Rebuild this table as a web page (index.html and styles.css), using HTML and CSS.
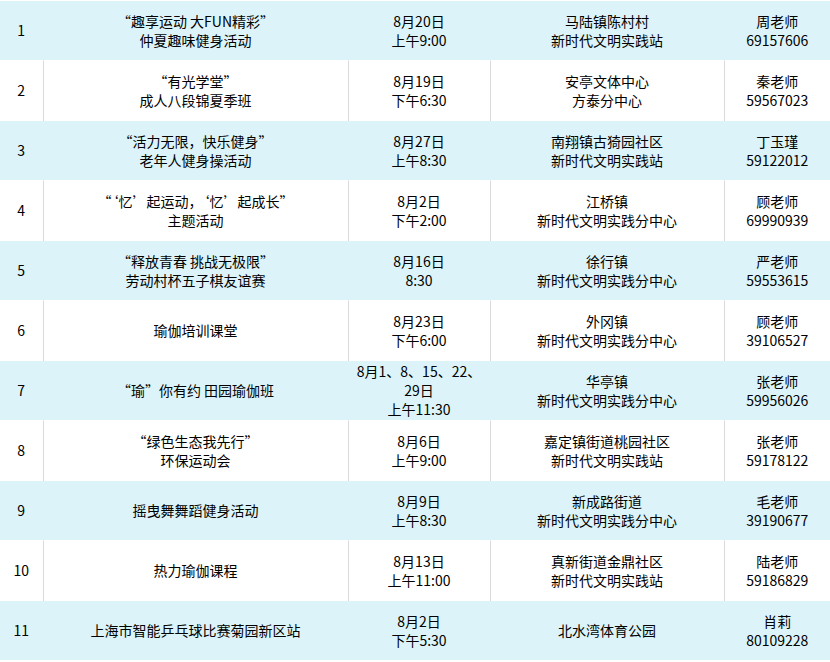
FILE: index.html
```html
<!DOCTYPE html>
<html lang="zh-CN">
<head>
<meta charset="utf-8">
<title>活动列表</title>
<link rel="stylesheet" href="styles.css">
</head>
<body>
<table class="schedule">
  <colgroup>
    <col class="c-num"><col class="c-name"><col class="c-date"><col class="c-place"><col class="c-contact">
  </colgroup>
  <tbody>
    <tr class="row alt"><td>1</td><td>“趣享运动 大FUN精彩”<br>仲夏趣味健身活动</td><td>8月20日<br>上午9:00</td><td>马陆镇陈村村<br>新时代文明实践站</td><td>周老师<br>69157606</td></tr>
    <tr class="row"><td>2</td><td>“有光学堂”<br>成人八段锦夏季班</td><td>8月19日<br>下午6:30</td><td>安亭文体中心<br>方泰分中心</td><td>秦老师<br>59567023</td></tr>
    <tr class="row alt"><td>3</td><td>“活力无限，快乐健身”<br>老年人健身操活动</td><td>8月27日<br>上午8:30</td><td>南翔镇古猗园社区<br>新时代文明实践站</td><td>丁玉瑾<br>59122012</td></tr>
    <tr class="row"><td>4</td><td>“‘忆’起运动，‘忆’起成长”<br>主题活动</td><td>8月2日<br>下午2:00</td><td>江桥镇<br>新时代文明实践分中心</td><td>顾老师<br>69990939</td></tr>
    <tr class="row alt"><td>5</td><td>“释放青春 挑战无极限”<br>劳动村杯五子棋友谊赛</td><td>8月16日<br>8:30</td><td>徐行镇<br>新时代文明实践分中心</td><td>严老师<br>59553615</td></tr>
    <tr class="row"><td>6</td><td>瑜伽培训课堂</td><td>8月23日<br>下午6:00</td><td>外冈镇<br>新时代文明实践分中心</td><td>顾老师<br>39106527</td></tr>
    <tr class="row alt"><td>7</td><td>“瑜”你有约 田园瑜伽班</td><td>8月1、8、15、22、<br>29日<br>上午11:30</td><td>华亭镇<br>新时代文明实践分中心</td><td>张老师<br>59956026</td></tr>
    <tr class="row"><td>8</td><td>“绿色生态我先行”<br>环保运动会</td><td>8月6日<br>上午9:00</td><td>嘉定镇街道桃园社区<br>新时代文明实践站</td><td>张老师<br>59178122</td></tr>
    <tr class="row alt"><td>9</td><td>摇曳舞舞蹈健身活动</td><td>8月9日<br>上午8:30</td><td>新成路街道<br>新时代文明实践分中心</td><td>毛老师<br>39190677</td></tr>
    <tr class="row"><td>10</td><td>热力瑜伽课程</td><td>8月13日<br>上午11:00</td><td>真新街道金鼎社区<br>新时代文明实践站</td><td>陆老师<br>59186829</td></tr>
    <tr class="row alt"><td>11</td><td>上海市智能乒乓球比赛菊园新区站</td><td>8月2日<br>下午5:30</td><td>北水湾体育公园</td><td>肖莉<br>80109228</td></tr>
  </tbody>
</table>
</body>
</html>
```
FILE: styles.css
```css
html, body {
  margin: 0;
  padding: 0;
  background: #ffffff;
}

.schedule {
  width: 830px;
  table-layout: fixed;
  border-collapse: collapse;
  font-family: "Noto Sans CJK SC", "Noto Sans", sans-serif;
  font-size: 14px;
  line-height: 19px;
  color: #000000;
  font-feature-settings: "fwid" 0;
}

.c-num { width: 43px; }
.c-name { width: 305px; }
.c-date { width: 142px; }
.c-place { width: 234px; }
.c-contact { width: 106px; }

.row td {
  height: 59px;
  padding: 0;
  text-align: center;
  vertical-align: middle;
  border-left: 1px solid #dadada;
  border-top: 1px solid #ffffff;
  white-space: nowrap;
}

.row td:first-child {
  border-left: none;
}

.row.alt td {
  background: #dcf4f9;
  border-left-color: #dcf4f9;
}
```
